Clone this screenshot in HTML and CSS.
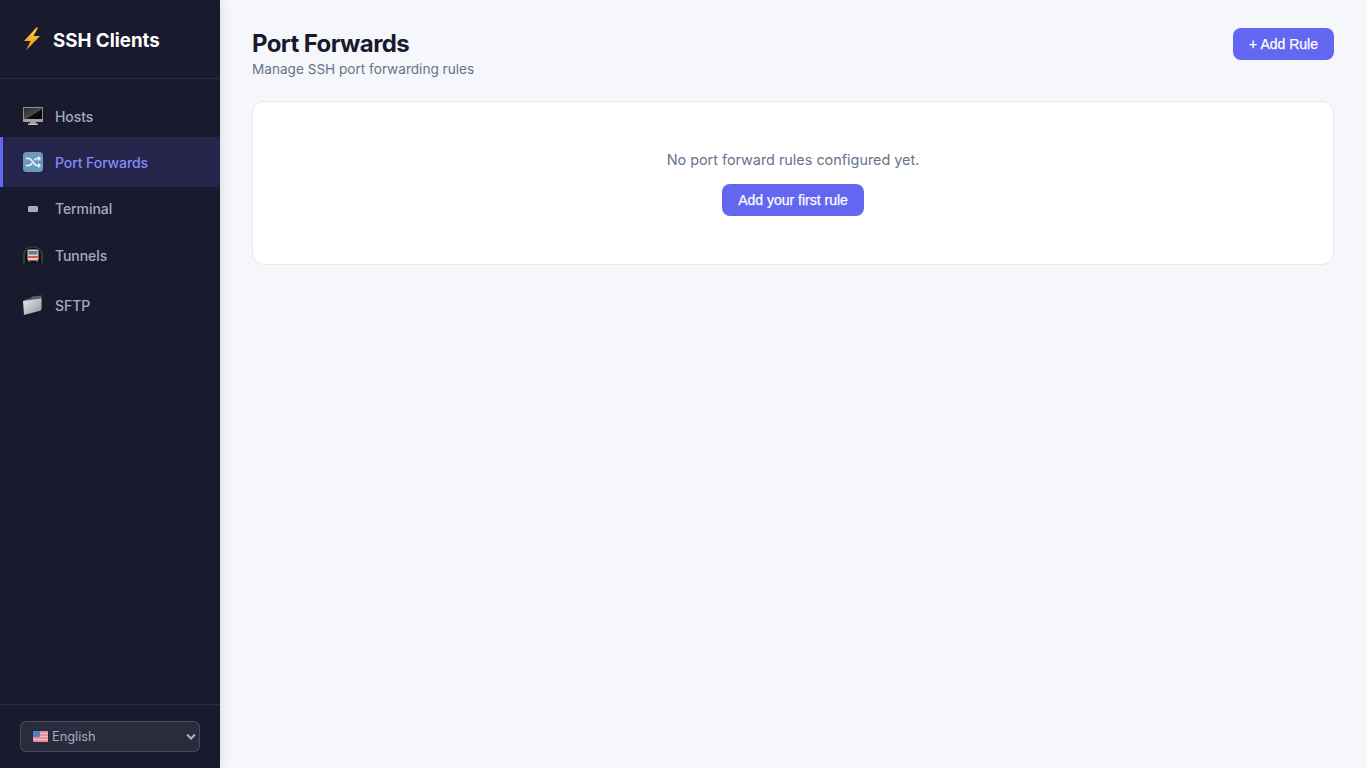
FILE: index.html
```html
<!DOCTYPE html>
<html lang="en">
<head>
<meta charset="utf-8">
<title>SSH Clients</title>
<link rel="stylesheet" href="styles.css">
</head>
<body>
<div class="app">
  <aside class="sidebar">
    <div class="brand">
      <svg class="brand-icon" width="18" height="24" viewBox="0 0 18 24"><defs><linearGradient id="bolt" x1="0" y1="0" x2="0" y2="1"><stop offset="0" stop-color="#ffd24a"/><stop offset="1" stop-color="#ef8a10"/></linearGradient></defs><path d="M13.500 .5 1 14H7.500L3 23.500 17 9H10.500L15 .5Z" fill="url(#bolt)"/></svg>
      <span class="brand-name">SSH Clients</span>
    </div>
    <nav class="nav">
      <a class="nav-item item-hosts"><span class="nav-icon">
        <svg width="20" height="18" viewBox="0 0 20 18"><defs><linearGradient id="scr" x1="0" y1="0" x2="1" y2="1"><stop offset="0" stop-color="#2a2a2a"/><stop offset=".55" stop-color="#4a4a4a"/><stop offset=".56" stop-color="#101010"/><stop offset="1" stop-color="#050505"/></linearGradient></defs><rect x="7" y="13" width="6" height="4" fill="#9a9a9a"/><rect x="5" y="16.500" width="10" height="1.500" fill="#bdbdbd"/><rect x="0" y="0" width="20" height="15" rx="1" fill="#a4a4a4"/><rect x=".8" y=".8" width="18.400" height="11.200" fill="url(#scr)"/></svg>
      </span><span>Hosts</span></a>
      <a class="nav-item item-active"><span class="nav-icon">
        <svg width="20" height="20" viewBox="0 0 20 20"><rect width="20" height="20" rx="3.500" fill="#6b99bc"/><path d="M3 6.500h3c3 0 4.500 7 8 7h1.500M3 13.500h3c1.300 0 2.200-1 3-2.200M11.300 8.200c.8-1 1.600-1.700 2.700-1.700h1.500" fill="none" stroke="#eef2f6" stroke-width="1.700"/><path d="M15 3.800 18 6.500 15 9.200ZM15 10.800 18 13.500 15 16.200Z" fill="#eef2f6"/></svg>
      </span><span>Port Forwards</span></a>
      <a class="nav-item item-terminal"><span class="nav-icon">
        <svg width="10" height="6" viewBox="0 0 10 6"><rect width="10" height="6" rx="1.500" fill="#a9b3c4"/><path d="M2 2h6M2 4h6" stroke="#8e99ad" stroke-width=".7"/></svg>
      </span><span>Terminal</span></a>
      <a class="nav-item item-tunnels"><span class="nav-icon">
        <svg width="20" height="18" viewBox="0 0 20 18"><path d="M0 17V9a10 9 0 0 1 20 0v8Z" fill="#3a3a3a"/><path d="M2 17V9a8 7.500 0 0 1 16 0v8Z" fill="#111"/><rect x="4.500" y="3.500" width="11" height="11" rx="1.500" fill="#d8d2c8"/><rect x="5.500" y="5" width="9" height="3.500" fill="#5f7f9f"/><rect x="4.500" y="10" width="11" height="2" fill="#e0504f"/><rect x="5" y="14.500" width="2" height="1.500" fill="#666"/><rect x="13" y="14.500" width="2" height="1.500" fill="#666"/></svg>
      </span><span>Tunnels</span></a>
      <a class="nav-item item-sftp"><span class="nav-icon">
        <svg width="20" height="20" viewBox="0 0 20 20"><defs><linearGradient id="fold" x1="0" y1="0" x2="1" y2="1"><stop offset="0" stop-color="#e8edf0"/><stop offset="1" stop-color="#8b949b"/></linearGradient></defs><path d="M1 5 8 3 9 1.500 18.500 0.500 19 14 4 16Z" fill="#59636a"/><path d="M0 6 18.500 3.500 18 15.500 1 20Z" fill="url(#fold)"/></svg>
      </span><span>SFTP</span></a>
    </nav>
    <div class="lang">
      <div class="lang-box">
        <select class="lang-select" aria-label="Language"><option>English</option></select>
        <svg class="lang-flag" width="15" height="11" viewBox="0 0 15 11"><rect width="15" height="11" rx="1" fill="#e98f9c"/><path d="M0 2.500h15M0 5.500h15M0 8.500h15" stroke="#f2c0c8" stroke-width="1.200"/><rect width="7" height="6" rx="1" fill="#4f7fc0"/></svg>
        <svg class="lang-chev" width="10" height="7" viewBox="0 0 10 7"><path d="M1 1.500 5 5.500 9 1.500" fill="none" stroke="#a9b3c4" stroke-width="2"/></svg>
      </div>
    </div>
  </aside>
  <main class="main">
    <header class="page-header">
      <div>
        <h1 class="title">Port Forwards</h1>
        <p class="subtitle">Manage SSH port forwarding rules</p>
      </div>
      <button class="btn">+ Add Rule</button>
    </header>
    <section class="card">
      <p class="empty">No port forward rules configured yet.</p>
      <button class="btn">Add your first rule</button>
    </section>
  </main>
</div>
</body>
</html>
```

FILE: styles.css
```css
* { box-sizing: border-box; }
html, body { margin: 0; height: 100%; }
body {
  font-family: Inter, "Liberation Sans", sans-serif;
  background: #f5f7fb;
  color: #1a1a2e;
  overflow: hidden;
}
.app { display: flex; height: 768px; }
.sidebar {
  width: 220px;
  flex: none;
  display: flex;
  flex-direction: column;
  background: #1a1a2e;
  box-shadow: 2px 0 10px rgba(0, 0, 0, 0.1);
}
.brand {
  height: 79px;
  display: flex;
  align-items: center;
  gap: 12px;
  padding: 0 23px;
  border-bottom: 1px solid rgba(255, 255, 255, 0.08);
}
.brand-icon { flex: none; }
.brand-name {
  font-size: 18.7px;
  font-weight: 700;
  color: #fff;
  padding-top: 2px;
}
.nav {
  flex: 1;
  padding-top: 16px;
  display: flex;
  flex-direction: column;
}
.nav-item {
  display: flex;
  align-items: center;
  gap: 12px;
  padding-left: 23px;
  font-size: 14px;
  letter-spacing: -0.08px;
  font-weight: 500;
  color: #a0aec0;
}
.nav-icon {
  width: 20px;
  display: flex;
  justify-content: center;
  align-items: center;
  flex: none;
}
.item-hosts { height: 42px; }
.item-active {
  height: 50px;
  padding-left: 20px;
  border-left: 3px solid #6366f1;
  background: rgba(99, 102, 241, 0.15);
  color: #818cf8;
}
.item-terminal { height: 43px; }
.item-tunnels { height: 50px; }
.item-sftp { height: 50px; }
.lang {
  height: 64px;
  padding: 16px 20px;
  border-top: 1px solid rgba(255, 255, 255, 0.08);
}
.lang-box { position: relative; height: 31px; }
.lang-select {
  display: block;
  width: 100%;
  height: 100%;
  appearance: none;
  padding: 0 0 0 31px;
  font-family: Inter, "Liberation Sans", sans-serif;
  font-size: 12.8px;
  color: #a0aec0;
  background: rgba(255, 255, 255, 0.08);
  border: 1px solid rgba(255, 255, 255, 0.15);
  border-radius: 6px;
}
.lang-flag { position: absolute; left: 13px; top: 10px; }
.lang-chev { position: absolute; right: 4px; top: 12px; }
.main {
  flex: 1;
  padding: 28px 32px;
  min-width: 0;
}
.page-header {
  display: flex;
  justify-content: space-between;
  align-items: flex-start;
  margin-bottom: 24px;
}
.title {
  margin: 0 0 2px;
  font-size: 24px;
  line-height: 31px;
  font-weight: 700;
  letter-spacing: -0.6px;
  color: #1a1a2e;
}
.subtitle {
  margin: 0;
  font-size: 13.6px;
  line-height: 16px;
  color: #64748b;
}
.btn {
  height: 32px;
  padding: 0 16px;
  border: none;
  border-radius: 8px;
  background: #6366f1;
  color: #fff;
  font-family: "Liberation Sans", Arial, sans-serif;
  font-size: 14px;
  font-weight: 500;
  -webkit-text-stroke: 0.25px #fff;
}
.card {
  height: 164px;
  display: flex;
  flex-direction: column;
  align-items: center;
  padding-top: 49px;
  background: #fff;
  border: 1px solid #e2e8f0;
  border-radius: 12px;
}
.empty {
  margin: 0 0 15px;
  font-size: 14.4px;
  line-height: 18px;
  color: #64748b;
}
```
